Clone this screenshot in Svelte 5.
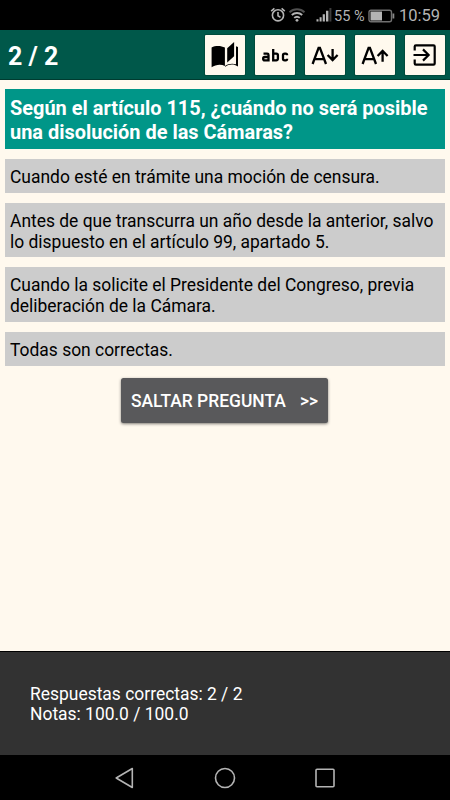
<script>
  const options = [
    ['Cuando esté en trámite una moción de censura.'],
    ['Antes de que transcurra un año desde la anterior, salvo', 'lo dispuesto en el artículo 99, apartado 5.'],
    ['Cuando la solicite el Presidente del Congreso, previa', 'deliberación de la Cámara.'],
    ['Todas son correctas.']
  ];
</script>

<div class="screen">
  <div class="status">
    <svg class="alarm" width="16" height="18" viewBox="0 0 16 18" fill="none" stroke="#b4b4b4" stroke-width="1.6">
      <circle cx="8" cy="9.3" r="5.6" />
      <path d="M8 6v3.7l2.5 1.6M1.2 5.2l3.2-2.8M14.8 5.2l-3.2-2.8" />
    </svg>
    <svg class="wifi" width="18" height="18" viewBox="0 0 18 18" fill="none" stroke="#b4b4b4" stroke-width="1.9">
      <path d="M1.5 6.2a11 11 0 0 1 15 0" stroke="#505050" />
      <path d="M3.8 9a7.6 7.6 0 0 1 10.4 0M6.2 11.9a4.2 4.2 0 0 1 5.6 0" />
      <circle cx="9" cy="14.3" r="1.4" fill="#b4b4b4" stroke="none" />
    </svg>
    <svg class="signal" width="16" height="14" viewBox="0 0 16 14" fill="#b4b4b4">
      <path d="M.5 11.2h2v2.3h-2zM3.6 9.2h2v4.3h-2zM6.7 6.2h2.2v7.3H6.7zM10 2.8h2.4v10.7H10z" />
      <path d="M13.4 0h2v13.5h-2z" fill="#3c3c3c" />
    </svg>
    <span class="percent">55 %</span>
    <svg class="battery" width="27" height="14" viewBox="0 0 27 14">
      <rect x="1" y="1.2" width="22.5" height="11.6" rx="2" fill="none" stroke="#707070" stroke-width="1.4" />
      <path d="M2.5 2.5H14v9H2.5z" fill="#b4b4b4" />
      <path d="M24.5 4.5h1.8v5h-1.8z" fill="#888" />
    </svg>
    <span class="clock">10:59</span>
  </div>

  <header>
    <span class="count">2 / 2</span>
    <div class="tools">
      <button aria-label="Libro">
        <svg width="40" height="40" viewBox="0 0 40 40">
          <path d="M6.6 12.4C10.5 10.4 16 10.4 19.9 12.6V31C16 28.9 10.5 29.6 6.6 32.3Z" />
          <path d="M22.2 13.3L29.1 7.1V21.3L22.2 27.6Z" />
          <path d="M20.3 31.8C24 29 29 28.7 33 31.6V12L31 11.2V29.2C27 28 23 28.8 19.9 31Z" />
        </svg>
      </button>
      <button aria-label="abc">
        <svg width="40" height="40" viewBox="0 0 40 40" fill="none" stroke="#000" stroke-width="2.3">
          <path d="M8.5 18.7h3.7a1.3 1.3 0 0 1 1.3 1.3v5.3H9.8a1.6 1.6 0 0 1 0-3.3h3.7" />
          <path d="M18.2 14v11.3h3.1a1.6 1.6 0 0 0 1.6-1.6v-3.4a1.6 1.6 0 0 0-1.6-1.6h-3.1" />
          <path d="M32.1 20.3c0-1.1-.5-1.6-1.4-1.6h-1c-1.1 0-1.7.6-1.7 1.6v3.4c0 1 .6 1.6 1.7 1.6h1c.9 0 1.4-.5 1.4-1.6" />
        </svg>
      </button>
      <button aria-label="Reducir texto">
        <svg width="40" height="40" viewBox="0 0 40 40" fill="none" stroke="#000" stroke-width="2.3">
          <path d="M7.6 29L13.6 12.8h1.3L21 29M9.8 24.2h9" />
          <path d="M27.6 14v11M22.6 20l5 5 5-5" />
        </svg>
      </button>
      <button aria-label="Ampliar texto">
        <svg width="40" height="40" viewBox="0 0 40 40" fill="none" stroke="#000" stroke-width="2.3">
          <path d="M7.6 29L13.6 12.8h1.3L21 29M9.8 24.2h9" />
          <path d="M27.6 26.7v-11M22.6 21l5-5 5 5" />
        </svg>
      </button>
      <button aria-label="Salir">
        <svg width="40" height="40" viewBox="0 0 40 40" fill="none" stroke="#000" stroke-width="2.2">
          <path d="M9.7 15.6v-4q0-1.2 1.2-1.2h17.6q1.2 0 1.2 1.2v16.8q0 1.2-1.2 1.2H10.9q-1.2 0-1.2-1.2v-4" />
          <path d="M8.5 20h15M18 14.4l5.6 5.6-5.6 5.6" />
        </svg>
      </button>
    </div>
  </header>

  <main>
    <h1>Según el artículo 115, ¿cuándo no será posible<br />una disolución de las Cámaras?</h1>
    {#each options as lines}
      <div class="option">
        {#each lines as line}<div>{line}</div>{/each}
      </div>
    {/each}
    <button class="skip"><span>SALTAR PREGUNTA</span><span>&gt;&gt;</span></button>
  </main>

  <footer>
    <div>Respuestas correctas: 2 / 2</div>
    <div>Notas: 100.0 / 100.0</div>
  </footer>

  <nav>
    <svg width="24" height="24" viewBox="0 0 24 24"><path d="M3.2 12L19.3 2.5v19z" /></svg>
    <svg width="24" height="24" viewBox="0 0 24 24"><circle cx="12" cy="12" r="9.5" /></svg>
    <svg width="24" height="24" viewBox="0 0 24 24"><rect x="3" y="3.2" width="18" height="17.6" rx="1" /></svg>
  </nav>
</div>

<style>
  :global(body) { margin: 0; }
  .screen {
    width: 450px;
    height: 800px;
    display: flex;
    flex-direction: column;
    overflow: hidden;
    background: #fff9ee;
    font-family: Roboto, sans-serif;
    white-space: nowrap;
  }
  svg { display: block; flex: none; }
  button { border: 0; padding: 0; font-family: inherit; }
  .status {
    flex: none;
    box-sizing: border-box;
    height: 30px;
    padding-left: 270px;
    display: flex;
    align-items: center;
    background: #000;
    color: #b4b4b4;
  }
  .wifi { margin-left: 2px; }
  .signal { margin-left: 10px; }
  .percent { width: 32px; margin-left: 2px; font-size: 14.5px; line-height: 18px; padding-top: 3px; }
  .battery { margin-left: 2px; margin-top: 1px; }
  .clock { margin-left: 4px; font-size: 16.5px; line-height: 20px; padding-top: 2px; }
  header {
    flex: none;
    box-sizing: border-box;
    height: 50px;
    padding: 0 5px 0 8px;
    display: flex;
    align-items: center;
    justify-content: space-between;
    background: #00584a;
    border-bottom: 1px solid #003b30;
  }
  .count { color: #fff; font-size: 25px; line-height: 30px; font-weight: 700; padding-top: 4px; }
  .tools { display: flex; gap: 10px; }
  .tools button { width: 40px; height: 40px; background: #fff9ee; border-radius: 1px; box-shadow: 0 0 0 1px #004b3c; }
  main {
    flex: none;
    box-sizing: border-box;
    height: 571px;
    padding: 9px 5px 0;
    display: flex;
    flex-direction: column;
  }
  h1 {
    margin: 0 0 10.3px;
    padding: 7px 5px 5px;
    background: #009688;
    color: #fff;
    font-size: 19.95px;
    line-height: 24px;
    font-weight: 700;
  }
  .option {
    margin-bottom: 10px;
    padding: 8px 5px 5px;
    background: #ccc;
    color: #000;
    font-size: 17.46px;
    line-height: 20.7px;
  }
  .skip {
    align-self: center;
    width: 207px;
    height: 45px;
    margin: 2px 1px 0 0;
    display: flex;
    align-items: center;
    justify-content: center;
    gap: 14px;
    background: #59595b;
    border-radius: 2.5px;
    box-shadow: 0 1px 3px rgba(0, 0, 0, .5);
    color: #fff;
    font-size: 17.44px;
    line-height: 22px;
    font-weight: 500;
  }
  .skip span { padding-top: 2px; }
  footer {
    flex: none;
    box-sizing: border-box;
    height: 104px;
    padding: 31.5px 30px 0;
    border-top: 1px solid #000;
    background: #323232;
    color: #fff;
    font-size: 17.46px;
    line-height: 20.7px;
  }
  nav {
    flex: none;
    height: 45px;
    display: flex;
    justify-content: center;
    align-items: center;
    gap: 76px;
    background: #000;
  }
  nav svg { fill: none; stroke: #b4b4b4; stroke-width: 1.6; stroke-linejoin: round; }
</style>
